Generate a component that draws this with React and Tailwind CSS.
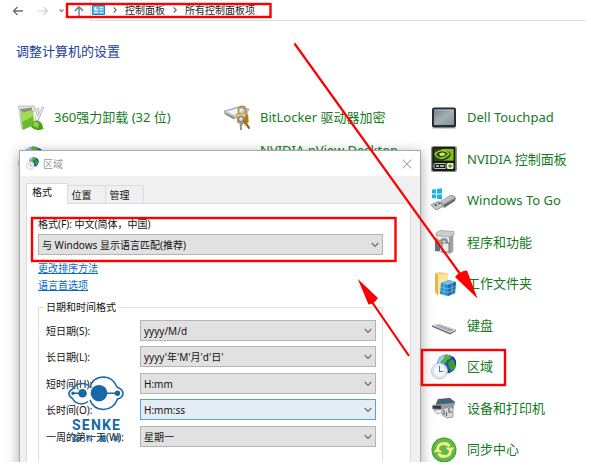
import React, { useState } from "react";

const linkFont = "font-['Noto_Sans','Noto_Sans_CJK_SC',sans-serif]";

function GlobeClock({ className }) {
  return (
    <svg viewBox="0 0 26 26" className={className} aria-hidden="true">
      <circle cx="15.5" cy="10" r="9.6" fill="#1b56b8" />
      <path d="M7 6 Q10 1 15 .6 L13 5 L10 8 L8 11 L6.5 10Z" fill="#8fd0ee" />
      <path d="M13 1 Q18 0 20 2 L19 5 L16 6 L15 9 L11 10 L10 7 L14 5Z" fill="#5cb531" />
      <path d="M20 6 L24 6 Q26 11 23 15 L20 17 L18 13 L17 9Z" fill="#3f9b28" />
      <path d="M14 13 L17 15 L18 18 L15 19Z" fill="#0b2f86" />
      <path d="M21 1.8 Q26 5 25 12 L23 6Z" fill="#0a2a80" />
      <circle cx="8.5" cy="17" r="8" fill="#e6edf2" stroke="#b3bec7" strokeWidth=".8" />
      <circle cx="8.500" cy="17" r="5.8" fill="#f8fbfd" stroke="#d0d9e0" strokeWidth=".6" />
      <path d="M8.5 12 V17.5 H12.5" fill="none" stroke="#66737e" strokeWidth="1.1" />
    </svg>
  );
}

function Icon({ name }) {
  if (name === "globe") return <GlobeClock className="size-[26px] shrink-0" />;
  return (
    <svg viewBox="0 0 26 26" className="size-[26px] shrink-0" aria-hidden="true">
      {name === "uninstall" && (
        <>
          <path d="M0 1 L16 1 L18 5 L15 7 L2 8Z" fill="#e4e5e6" stroke="#a6a9ab" strokeWidth=".7" />
          <path d="M2 4 L14 2.5 L14 6 L3 8Z" fill="#8b9290" />
          <path d="M1 7 L4 6 L5 25 L3 24Z" fill="#c9ccc9" />
          <path d="M3 8 L15 5 L16 20 L5 25Z" fill="#6cb92c" />
          <path d="M3 8 L15 5 L15.5 11 L4 17Z" fill="#a1dc55" />
          <path d="M24.5 3 L18 18 M20 4 L18 17" stroke="#a9adb0" strokeWidth="2.6" strokeLinecap="round" />
          <path d="M24.5 3 L18 17 M20 4 L18 16" stroke="#f3f4f5" strokeWidth="1.3" strokeLinecap="round" />
          <path d="M16 16 Q21 14 24 19 L25.5 24 Q18 27 13 22Z" fill="#4f9e1e" />
          <path d="M16 17 Q20 16 21 19 L20 23 L15 21Z" fill="#8bd33f" />
        </>
      )}
      {name === "bitlocker" && (
        <>
          <path d="M0 6 L14 2 L25 4 L23 8 L10 14 L1 9Z" fill="#c3c7cd" stroke="#858b93" strokeWidth=".6" />
          <path d="M3 6.5 L14 3.5 L20 5 L10 10Z" fill="#f3f5f8" />
          <path d="M1 8 L10 12 V14 L1 9Z" fill="#7e858e" />
          <path d="M14.500 10 V5 Q14.500 1.500 18 1.500 Q21.500 1.500 21.500 5 V10" fill="none" stroke="#b58f42" strokeWidth="1.8" />
          <path d="M12.500 8.500 L24 8.500 L25 17 L22 19.500 L13 18Z" fill="#c9a043" />
          <path d="M13.500 9.500 H21 V12 H13.500Z" fill="#efd37c" />
          <path d="M21 11 L24 10 V17 L20 18Z" fill="#a97d25" />
          <circle cx="17" cy="14" r="2.6" fill="#e9dfbe" stroke="#7c8087" strokeWidth="1.400" />
          <path d="M16.500 16.500 L17 25 M18.500 20 H16" stroke="#8f949a" strokeWidth="2" />
          <path d="M20 16 L25.500 23.500" stroke="#94701f" strokeWidth="2.2" />
        </>
      )}
      {name === "touchpad" && (
        <>
          <defs>
            <linearGradient id="pad" x1="0" y1="0" x2="1" y2="1">
              <stop offset="0" stopColor="#75828a" />
              <stop offset=".5" stopColor="#a3aeb5" />
              <stop offset="1" stopColor="#84919a" />
            </linearGradient>
          </defs>
          <rect x="1" y="21" width="24" height="3" rx="1.5" fill="#d0d3d5" />
          <rect x="1" y="2.5" width="24" height="20" rx="2" fill="#272d33" />
          <rect x="3" y="4.5" width="20" height="15.5" rx=".6" fill="url(#pad)" />
          <path d="M3.500 5 H22.500" stroke="#bcc7cd" strokeWidth=".8" />
        </>
      )}
      {name === "nvidia" && (
        <>
          <rect x="0" y="0" width="26" height="26" rx="2.5" fill="#8d8f8d" />
          <rect x="1.3" y="1" width="23" height="24" rx="1.5" fill="#171a16" />
          <rect x="3" y="2.5" width="19.5" height="12.5" fill="#2a4708" />
          <path d="M11 3 H22.5 V14.5 H12 Q19 13 20 8 Q17 4 11 5Z" fill="#87bd1b" />
          <path d="M4 8 Q9 2.5 16 6 L18 8 Q12 14 7 11.5 Q5 10 4 8Z" fill="none" stroke="#a9da3a" strokeWidth="1.3" />
          <path d="M8 8 Q11 5 15 8 Q12 11 9 9.5Z" fill="#c7ea67" />
          <rect x="3" y="17.5" width="12" height="5" rx=".8" fill="none" stroke="#c1c4c1" />
          <path d="M5 20 H8 M9 20 H13" stroke="#e0e0e0" strokeWidth="1.4" />
          <rect x="16" y="17" width="6.5" height="6" rx="1" fill="#e8f4df" />
          <path d="M17 20 H21.5 M19.2 18 V22" stroke="#4c9e26" strokeWidth="1.4" />
        </>
      )}
      {name === "togo" && (
        <>
          <path d="M1 1.7 L5 1.1 V5.5 H1Z M6 1 L11 .2 V5.5 H6Z M1 6.5 H5 V10.6 L1 10Z M6 6.5 H11 V11.5 L6 10.8Z" fill="#17b5ec" />
          <path d="M8 14 L19 7 Q21 6 24 8.5 Q26 10 24 12 L13 19Z" fill="#959a9e" />
          <path d="M9 13.5 L19 7.5 L23.5 9.5 L12.5 16Z" fill="#bcc0c4" />
          <path d="M13 17 L24.5 10.5 L24 13 L13 20Z" fill="#62676c" />
          <path d="M0 17 L7 13.5 L13 18 L5 22Z" fill="#c5c9cc" stroke="#7a7f84" strokeWidth=".8" />
          <path d="M3 17 L5 16 L6.5 17.2 L4.5 18.3Z M6.5 15.3 L8 14.5 L9.5 15.7 L8 16.6Z" fill="#555b60" />
        </>
      )}
      {name === "programs" && (
        <>
          <path d="M6 4 L10 2 L22 3 V23 L18 25 L5 22Z" fill="#e8eaec" stroke="#a6abb0" strokeWidth=".6" />
          <path d="M5 4 L9 1.5 L23 2.5 V6 L18 8 L5 6.5Z" fill="#c9cdd0" stroke="#8d9399" strokeWidth=".6" />
          <path d="M18 8 L22 6 V22 L18 25Z" fill="#9ba1a7" />
          <circle cx="13" cy="13" r="4" fill="#87929a" />
          <circle cx="13" cy="13" r="1.6" fill="#dfe5e9" />
          <path d="M4 11 H9 V22 H4Z" fill="#4c7890" />
          <path d="M11 14 H18 V23 H11Z" fill="#e5ecf0" stroke="#60686e" strokeWidth=".8" />
          <path d="M4 8 L11 13 L8 16Z" fill="#d98b4f" />
        </>
      )}
      {name === "folder" && (
        <>
          <path d="M4 2 L8 1 L17 2 V21 L6 22 L4 21Z" fill="#f4d67e" />
          <path d="M4 2 L7 4 V25 L4 21Z" fill="#e2b753" />
          <path d="M7 4 L17 3 V20 L7 24Z" fill="#fbe6a0" />
          <path d="M10 12 L18 9 L25 11 L24 22 L17 25 L9 23Z" fill="#2c8cc9" />
          <path d="M10 12 L18 9 L25 11 L17 14Z" fill="#71c1ea" />
          <path d="M17 14 L25 11 L24 22 L17 25Z" fill="#1c6ca8" />
          <path d="M9.5 16 L17 18 L25 15 M9.5 19.5 L17 21.5 L24.5 18.5 M13 13 V24 M21 12.5 V23.5" stroke="#8fd0f0" strokeWidth=".6" fill="none" />
        </>
      )}
      {name === "keyboard" && (
        <>
          <path d="M1 13.500 L8 12 L25 18 L19 21Z" fill="#d9dcde" stroke="#b4b9bd" strokeWidth=".5" />
          <path d="M4 14 L8 13 L22.5 18 L18.5 19.500Z" fill="#8c9297" />
          <path d="M6 14 L20 19 M10 13.7 L7 15.2 M13.5 15 L10.5 16.5 M17 16 L14 18" stroke="#d2d6d9" strokeWidth=".6" />
          <path d="M1 13.500 L19 21 L25 18 V19 L19 22.500 L1 14.700Z" fill="#60666b" />
        </>
      )}
      {name === "printer" && (
        <>
          <path d="M7 4 L19 3 L24 7 L22 14 L9 15 L4 11Z" fill="#565e65" />
          <path d="M8 4.5 L18 3.5 L21 6.5 L10 8Z" fill="#2e688c" />
          <path d="M1 10 L10 9 L24 8 L22 14 L11 17 L1 14Z" fill="#969ca1" />
          <path d="M2 11 L10 10.5 L10 14 L2 13.5Z" fill="#34393e" />
          <path d="M3 15 L12 14 L13 17 L6 19Z" fill="#e9ecee" stroke="#7d848a" strokeWidth=".6" />
          <path d="M11 14 L18 12 L22 13 V22 L16 23 L11 20Z" fill="#d5d9dc" stroke="#7d848a" strokeWidth=".7" />
          <path d="M13 15 V20 M15.5 17 V21 M18 13 V17 H21" stroke="#555c62" strokeWidth="1.1" fill="none" />
        </>
      )}
      {name === "sync" && (
        <>
          <circle cx="13" cy="13" r="12.5" fill="#44a336" />
          <circle cx="13" cy="13" r="11.3" fill="#5dba45" />
          <path d="M6.5 13 Q6.500 6.5 13.5 6.5 Q17 6.7 18.5 9.5" fill="none" stroke="#f7ec8c" strokeWidth="2.800" />
          <path d="M14.5 10.5 H23.500 L19.5 15.5Z" fill="#f7ec8c" />
          <path d="M19.5 14 Q19 19.6 12.8 19.5 Q9 19.3 7.5 16.5" fill="none" stroke="#f7ec8c" strokeWidth="2.800" />
          <path d="M2.5 15.2 H11.500 L6.5 10.5Z" fill="#f7ec8c" />
        </>
      )}
    </svg>
  );
}

const columns = [
  [
    { icon: "uninstall", label: "360强力卸载 (32 位)" },
    { icon: "globe", label: "" },
  ],
  [
    { icon: "bitlocker", label: "BitLocker 驱动器加密" },
    { icon: null, label: "NVIDIA nView Desktop Manager" },
  ],
  [
    { icon: "touchpad", label: "Dell Touchpad" },
    { icon: "nvidia", label: "NVIDIA 控制面板" },
    { icon: "togo", label: "Windows To Go" },
    { icon: "programs", label: "程序和功能" },
    { icon: "folder", label: "工作文件夹" },
    { icon: "keyboard", label: "键盘" },
    { icon: "globe", label: "区域" },
    { icon: "printer", label: "设备和打印机" },
    { icon: "sync", label: "同步中心" },
  ],
];

const formats = [
  { id: "short-date", label: "短日期(S):", value: "yyyy/M/d" },
  { id: "long-date", label: "长日期(L):", value: "yyyy'年'M'月'd'日'" },
  { id: "short-time", label: "短时间(H):", value: "H:mm" },
  { id: "long-time", label: "长时间(O):", value: "H:mm:ss", active: true },
  { id: "first-day", label: "一周的第一天(W):", value: "星期一" },
];

function Crumb() {
  return (
    <svg viewBox="0 0 4 6" className="h-1.5 w-1 shrink-0" aria-hidden="true">
      <path d="M.7 .5 L3.3 3 L.7 5.5" fill="none" stroke="#666" strokeWidth="1.1" />
    </svg>
  );
}

function AddressBar() {
  return (
    <nav className="flex h-[21px] items-stretch pl-3 text-[10px] text-[#222]">
      <div className="flex items-center gap-[13px]">
        <button type="button" aria-label="Back">
          <svg viewBox="0 0 12 10" className="h-2.5 w-3">
            <path d="M11 5 H1.5 M5.5 1 L1.5 5 L5.5 9" fill="none" stroke="#6a6a6a" strokeWidth="1.3" />
          </svg>
        </button>
        <button type="button" aria-label="Forward">
          <svg viewBox="0 0 12 10" className="h-2.5 w-3">
            <path d="M1 5 H10.5 M6.5 1 L10.5 5 L6.5 9" fill="none" stroke="#d0d0d0" strokeWidth="1.2" />
          </svg>
        </button>
      </div>
      <button type="button" aria-label="Recent" className="ml-2">
        <svg viewBox="0 0 8 6" className="h-1.5 w-2">
          <path d="M2.5 1.5 L4.5 3.700 L6.5 1.5" fill="none" stroke="#888" strokeWidth="1.2" />
        </svg>
      </button>
      <button type="button" aria-label="Up" className="ml-2">
        <svg viewBox="0 0 12 12" className="size-3">
          <path d="M6 11 V1.8 M1.8 6 L6 1.8 L10.2 6" fill="none" stroke="#777" strokeWidth="1.4" />
        </svg>
      </button>
      <div className="ml-[5px] flex flex-1 items-center gap-2 border border-t-0 border-r-0 border-[#dedede] pl-px">
        <svg viewBox="0 0 13 10" className="h-2.5 w-[13px]" aria-hidden="true">
          <rect width="13" height="10" rx=".8" fill="#2380c2" />
          <rect x="1" y="1" width="11" height="8" fill="#55bdf0" />
          <circle cx="4" cy="4" r="2" fill="#d8f1fc" />
          <path d="M4 4 V2 A2 2 0 0 1 6 4Z" fill="#f5a13a" />
          <path d="M8 2.5 H11 M8 4.5 H11 M2 7.5 H6 M8 7.5 H11" stroke="#eefaff" />
        </svg>
        <Crumb />
        <a href="#panel">控制面板</a>
        <Crumb />
        <a href="#all">所有控制面板项</a>
      </div>
    </nav>
  );
}

function Combo({ id, value, active }) {
  return (
    <div className="relative h-[21px]">
      <select
        id={id}
        className={`block h-full w-full appearance-none rounded-none border pl-[3px] text-[10px] leading-4 outline-none ${
          active ? "border-[#5a9fd8] bg-[#e4ecf4]" : "border-[#b4b4b4] bg-[#e1e1e1]"
        }`}
      >
        <option>{value}</option>
      </select>
      <svg viewBox="0 0 8 6" className="pointer-events-none absolute top-2 right-1 h-1.5 w-2" aria-hidden="true">
        <path d="M.7 1 L4 4.400 L7.3 1" fill="none" stroke="#6a6a6a" strokeWidth="1.1" />
      </svg>
    </div>
  );
}

function RegionDialog() {
  const [tab, setTab] = useState("格式");

  return (
    <section
      role="dialog"
      aria-label="区域"
      className="absolute top-[150px] -bottom-4 left-[19px] flex w-[402px] flex-col border border-[#a8a8a8] bg-[#f0f0f0] text-[10px] leading-4 text-[#111] shadow-[0_3px_12px_rgba(0,0,0,0.35)]"
    >
      <header className="flex h-[25px] shrink-0 items-center gap-1 bg-white pr-2 pl-1.5">
        <GlobeClock className="size-[13px]" />
        <h2 className="flex-1 text-[#999]">区域</h2>
        <button type="button" aria-label="Close">
          <svg viewBox="0 0 10 10" className="size-2.5">
            <path d="M.7 .7 L9.3 9.3 M9.3 .7 L.7 9.3" stroke="#aaa" strokeWidth="1.1" />
          </svg>
        </button>
      </header>

      <div className="flex flex-1 flex-col pt-[7px] pr-[9px] pl-1.5">
        <div role="tablist" className="flex items-end">
          {["格式", "位置", "管理"].map((name) => (
            <button
              key={name}
              type="button"
              role="tab"
              aria-selected={tab === name}
              onClick={() => setTab(name)}
              className={
                tab === name
                  ? "relative -mb-px h-[21px] w-[42px] border border-b-0 border-[#dcdcdc] bg-white pr-2.5 pb-1 text-center"
                  : "h-[18px] w-[38px] border border-b-0 border-l-0 border-[#dcdcdc] pr-2.5"
              }
            >
              {name}
            </button>
          ))}
        </div>

        <div role="tabpanel" className="flex-1 border border-[#dcdcdc] bg-white pt-3 pr-[27px] pl-[11px]">
          <label htmlFor="locale" className="block">
            格式(F): 中文(简体，中国)
          </label>
          <div className="mt-0.5">
            <Combo id="locale" value="与 Windows 显示语言匹配(推荐)" />
          </div>
          <div className="mt-[5px] flex flex-col items-start leading-[17px] text-[#0a6bcb] underline">
            <a href="#sort">更改排序方法</a>
            <a href="#language">语言首选项</a>
          </div>

          <fieldset className="mt-[5px] border border-[#dfdfdf] pr-1.5 pb-12 pl-[7px]">
            <legend className="-ml-0.5 px-0.5">日期和时间格式</legend>
            <div className="grid auto-rows-[26px_27px] pt-[5px]">
              {formats.map((item) => (
                <div key={item.id} className="grid grid-cols-[94px_1fr] items-start">
                  <label htmlFor={item.id} className="pt-[3px]">
                    {item.label}
                  </label>
                  <Combo id={item.id} value={item.value} active={item.active} />
                </div>
              ))}
            </div>
          </fieldset>
        </div>
      </div>
    </section>
  );
}

function Watermark() {
  return (
    <div className="pointer-events-none absolute top-[376px] left-[68px] flex w-14 flex-col items-center text-[#1769a5]">
      <svg viewBox="0 0 56 36" className="h-9 w-14" aria-hidden="true">
        <g fill="none" stroke="currentColor" strokeWidth="1.6">
          <path d="M21 10 Q17 6.5 11 8 Q6 9.5 4.5 13 Q1 15 .9 17.5 Q1 20.5 4.5 22.5 Q7 27.5 13 28 Q17 28 20 25.5" />
          <path d="M22 12 Q24 1 36 1 Q45 1.5 49 11 Q55 13.5 55 17.5 Q55 21.5 49.5 23 Q46 33 35.5 33.5 Q25 33 22 24" />
          <path d="M4 17.2 H13 M30 17.2 H49" />
        </g>
        <g fill="currentColor">
          <circle cx="5" cy="17.2" r="1.7" />
          <circle cx="14.5" cy="17.2" r="4.3" />
          <circle cx="31" cy="17.2" r="8.3" />
          <circle cx="49.5" cy="17.2" r="2.7" />
        </g>
      </svg>
      <div className="mt-1 flex w-12 justify-between font-[Roboto,sans-serif] text-sm leading-[18px] font-bold">
        <span>S</span>
        <span>E</span>
        <span>N</span>
        <span>K</span>
        <span>E</span>
      </div>
      <div className="flex w-12 justify-between text-[7px] leading-[9px] font-bold">
        <span>森</span>
        <span>科</span>
        <span>器</span>
        <span>材</span>
      </div>
    </div>
  );
}

function Annotations() {
  return (
    <svg
      width="591"
      height="466"
      viewBox="0 0 591 466"
      className="pointer-events-none absolute top-0 left-0 max-w-none"
      aria-hidden="true"
    >
      <g fill="none" stroke="#fe0000" strokeWidth="2.4">
        <rect x="67" y="4" width="203.500" height="13" />
        <rect x="32" y="218" width="363.500" height="43" />
        <rect x="422" y="350" width="83" height="35" />
        <path d="M294.500 43.500 L463 278 M409 356 L372 302" strokeWidth="2.2" />
      </g>
      <path d="M477.500 298.500 L455 277 Q460 271 467 270.500Z M357.800 279 L368.500 304.500 Q374 304 378 298Z" fill="#fe0000" />
    </svg>
  );
}

function App() {
  return (
    <div className="h-screen bg-white pr-[5px] pb-1">
      <main className={`relative h-full overflow-hidden ${linkFont}`}>
        <AddressBar />
        <h1 className="mt-5 pl-4 text-[13px] leading-5 text-[#1c409b]">调整计算机的设置</h1>

        <div className="mt-9 grid grid-cols-[206px_207px_1fr] pl-[18px] text-[13px] leading-[17px] text-[#157a1d]">
          {columns.map((items, i) => (
            <ul key={i} className="grid auto-rows-[41px_42px] content-start">
              {items.map((item, j) => (
                <li key={j}>
                  <a href="#item" className="flex h-full items-center gap-2.5">
                    {item.icon ? <Icon name={item.icon} /> : <span className="w-[26px] shrink-0" />}
                    <span>{item.label}</span>
                  </a>
                </li>
              ))}
            </ul>
          ))}
        </div>

        <RegionDialog />
        <Watermark />
      </main>
      <Annotations />
    </div>
  );
}

export default App;
